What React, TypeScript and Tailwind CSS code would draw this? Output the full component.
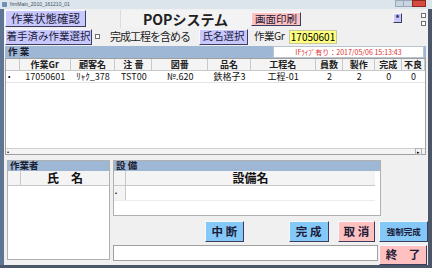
const font = "font-['Noto_Sans_CJK_JP','Noto_Sans',sans-serif]";

const cols = [
  { name: "作業Gr", w: "w-[51px]", v: "17050601" },
  { name: "顧客名", w: "w-[45px]", v: "ﾘｬｸ_378" },
  { name: "注 番", w: "w-[37px]", v: "TST00" },
  { name: "図番", w: "w-[56px]", v: "№.620" },
  { name: "品名", w: "w-[43px]", v: "鉄格子3" },
  { name: "工程名", w: "w-[65px]", v: "工程-01" },
  { name: "員数", w: "w-[28px]", v: "2" },
  { name: "製作", w: "w-[32px]", v: "2" },
  { name: "完成", w: "w-[27px]", v: "0" },
  { name: "不良", w: "w-[23px]", v: "0" },
];

const raised = "border border-t-[#f8f8ff] border-l-[#f8f8ff] border-r-[#3c3c5c] border-b-[#3c3c5c]";

const Btn = ({ label, className }: { label: string; className: string }) => (
  <div className={`flex items-center justify-center leading-none whitespace-nowrap text-[#1c1c3a] ${raised} ${className}`}>
    {label}
  </div>
);

const Check = () => <div className="w-[5px] h-[5px] border border-[#707070] bg-white" />;

export default function App() {
  return (
    <div className={`w-[432px] h-[268px] flex flex-col bg-[#55657c] overflow-hidden ${font}`}>
      {/* title bar */}
      <div className="h-[9px] flex items-center bg-[#dce4ec] pl-[2px]">
        <div className="w-[5px] h-[5px] bg-[#6d8fb8] rounded-[1px]" />
        <span className="ml-[3px] text-[5px] leading-none text-[#405060] whitespace-nowrap font-['Liberation_Sans',sans-serif]">
          frmMain_2010_161210_01
        </span>
        <div className="ml-auto mr-[6px] flex h-[7px] self-start">
          <div className="w-[9px] bg-[#c8d4e0] border border-[#9aa8b8]" />
          <div className="w-[8px] bg-[#c8d4e0] border-y border-[#9aa8b8]" />
          <div className="w-[14px] bg-[#d44d40] border border-[#8c2a22]" />
        </div>
      </div>

      <div className="flex flex-1">
        <div className="w-[4px] bg-[#5f7591]" />
        <div className="w-[424px] bg-[#f0f0f0] flex flex-col">
          {/* row 1 */}
          <div className="mt-[1px] h-[18px] flex">
            <Btn label="作業状態確認" className="ml-[1px] w-[81px] h-[17px] bg-[#c8c8ff] text-[11.5px]" />
            <div className="ml-[34px] w-[130px] h-[18px] flex items-center justify-center border-l border-[#dcdcdc] bg-[#f3f3f3]">
              <span className="text-[14px] font-semibold text-[#202020] leading-none whitespace-nowrap">POPシステム</span>
            </div>
            <Btn label="画面印刷" className="ml-[1px] mt-[2px] w-[50px] h-[14px] bg-[#ffc0c0] text-[10.5px]" />
            <Btn label="*" className="ml-[92px] mt-[3px] w-[9px] h-[10px] bg-[#c8c8ff] text-[9px] font-bold" />
            <div className="ml-[19px] mt-[3px] flex flex-col gap-[3px]">
              <Check />
              <Check />
            </div>
          </div>

          {/* row 2 */}
          <div className="h-[17px] flex items-center">
            <Btn label="着手済み作業選択" className="ml-[1px] w-[87px] h-[16px] bg-[#c8c8ff] text-[10.5px]" />
            <div className="ml-[3px]"><Check /></div>
            <span className="ml-[10px] w-[89px] text-[11px] tracking-[-1px] leading-none whitespace-nowrap text-[#1c1c1c]">完成工程を含める</span>
            <Btn label="氏名選択" className="w-[49px] h-[16px] bg-[#c8c8ff] text-[10.5px]" />
            <span className="ml-[6px] w-[35px] text-[10.5px] tracking-[-0.5px] leading-none whitespace-nowrap text-[#1c1c1c]">作業Gr</span>
            <div className="w-[48px] h-[14px] bg-[#ffff80] border border-[#c8c8a0] flex items-center justify-center text-[10px] leading-none">
              17050601
            </div>
          </div>

          {/* 作業 bar */}
          <div className="mt-[1px] ml-[1px] w-[421px] h-[12px] bg-[#9db7d5] flex items-center">
            <span className="ml-[3px] text-[9.5px] font-bold leading-none text-[#1a2030] whitespace-nowrap">作 業</span>
            <div className="ml-auto mr-[2px] w-[151px] h-[12px] bg-white border border-[#b8c4d0] flex items-center justify-center">
              <span className="text-[7px] leading-none text-[#e03030] whitespace-nowrap">IFﾗｲﾌﾞ有り：2017/05/06 15:13:43</span>
            </div>
          </div>

          {/* grid */}
          <div className="ml-[1px] w-[421px] h-[97px] bg-white border border-[#a0a0a0] flex flex-col">
            <div className="h-[12px] flex bg-[#f4f4f4] border-b border-[#c8c8c8]">
              <div className="w-[14px] border-r border-[#c8c8c8]" />
              {cols.map((c) => (
                <div key={c.name} className={`${c.w} border-r border-[#c8c8c8] flex items-center justify-center whitespace-nowrap text-[9px] leading-none font-bold text-[#222]`}>
                  {c.name}
                </div>
              ))}
            </div>
            <div className="h-[12px] flex border-b border-[#e4e4e4]">
              <div className="w-[14px] flex items-center pl-[2px] text-[7px] leading-none">•</div>
              {cols.map((c) => (
                <div key={c.name} className={`${c.w} flex items-center justify-center whitespace-nowrap text-[9px] leading-none text-[#111]`}>
                  {c.v}
                </div>
              ))}
            </div>
            <div className="flex-1" />
            <div className="h-[6px] flex items-center border-t border-[#d0d0d0] bg-[#f4f4f4]">
              <span className="ml-[1px] text-[6px] leading-none">•</span>
              <span className="ml-auto mr-[3px] text-[5px] leading-none border border-[#b0b0b0] px-[1px]">▸</span>
            </div>
          </div>

          {/* bottom area */}
          <div className="mt-[5px] flex h-[105px]">
            {/* 作業者 */}
            <div className="ml-[3px] w-[103px] h-[100px] bg-white border border-[#b0b0b0] flex flex-col">
              <div className="h-[10px] bg-[#9db7d5] flex items-center">
                <span className="ml-[2px] text-[9.5px] font-bold leading-none text-[#1a2030] whitespace-nowrap">作業者</span>
              </div>
              <div className="h-[15px] flex bg-[#f4f4f4] border-b border-[#c8c8c8]">
                <div className="w-[13px] border-r border-[#c8c8c8]" />
                <div className="flex-1 flex items-center justify-center text-[12px] font-bold leading-none whitespace-nowrap text-[#111]">氏　名</div>
              </div>
            </div>

            {/* right column */}
            <div className="ml-[3px] w-[315px] flex flex-col">
              <div className="w-[268px] h-[56px] bg-white border border-[#b0b0b0] flex flex-col">
                <div className="h-[10px] bg-[#9db7d5] flex items-center">
                  <span className="ml-[2px] text-[9.5px] font-bold leading-none text-[#1a2030] whitespace-nowrap">設 備</span>
                </div>
                <div className="h-[15px] flex bg-[#f4f4f4] border-b border-[#c8c8c8] mr-[5px]">
                  <div className="w-[12px] border-r border-[#c8c8c8]" />
                  <div className="flex-1 flex items-center justify-center text-[12px] font-bold leading-none whitespace-nowrap text-[#111]">設備名</div>
                </div>
                <div className="h-[15px] flex border-b border-[#ececec] mr-[5px]">
                  <div className="w-[12px] border-r border-[#c8c8c8] bg-[#f4f4f4] flex items-center pl-[1px] text-[6px] leading-none">•</div>
                </div>
              </div>

              <div className="mt-[5px] h-[21px] flex">
                <Btn label="中 断" className="ml-[92px] w-[39px] h-[21px] bg-[#84c8f8] text-[11.5px] font-bold" />
                <Btn label="完 成" className="ml-[45px] w-[40px] h-[21px] bg-[#84c8f8] text-[11.5px] font-bold" />
                <Btn label="取 消" className="ml-[9px] w-[38px] h-[21px] bg-[#ffc0c0] text-[11.5px] font-bold" />
                <Btn label="強制完成" className="ml-[4px] w-[49px] h-[21px] bg-[#84c8f8] text-[8.5px] font-bold" />
              </div>

              <div className="mt-[3px] h-[20px] flex">
                <div className="w-[265px] h-[16px] bg-white border border-[#a0a0a0]" />
                <Btn label="終　了" className="ml-[1px] w-[48px] h-[20px] bg-[#ffc0c0] text-[11.5px] font-bold" />
              </div>
            </div>
          </div>
        </div>
        <div className="w-[4px] bg-[#4b5668]" />
      </div>
      <div className="h-[3px] bg-[#4b5668]" />
    </div>
  );
}
